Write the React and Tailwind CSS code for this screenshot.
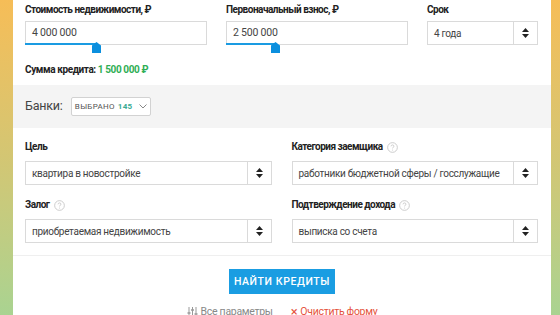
import React from "react";

function SortIcon() {
	return (
		<svg width="7" height="10" viewBox="0 0 7 10">
			<path d="M3.5 0 L7 4 H0 Z" fill="#222" />
			<path d="M3.5 10 L7 6 H0 Z" fill="#222" />
		</svg>
	);
}

function Help() {
	return (
		<svg width="11" height="11" viewBox="0 0 12 12" className="ml-1 inline-block">
			<circle cx="6" cy="6" r="5.3" fill="none" stroke="#c8c8c8" strokeWidth="1" />
			<path d="M4.4 4.7 C4.4 3.7 5.1 3.2 6 3.2 C6.9 3.2 7.6 3.8 7.6 4.6 C7.6 5.6 6.1 5.8 6.1 7" fill="none" stroke="#c8c8c8" strokeWidth="1" />
			<circle cx="6.1" cy="8.7" r="0.6" fill="#c8c8c8" />
		</svg>
	);
}

function Handle() {
	return (
		<svg width="9" height="11" viewBox="0 0 9 11">
			<path d="M4.5 0 L9 3.5 V11 H0 V3.5 Z" fill="#0b8fde" />
		</svg>
	);
}

// track = blue part of the bottom line, knob = handle position
function SliderInput({ value, track, knob }) {
	return (
		<div className="relative h-6 border border-[#dadada] bg-white">
			<div className="flex h-full items-center px-[6px] text-[10.5px] tracking-[-0.2px] text-[#444]">{value}</div>
			<div className={`absolute -bottom-px left-[-1px] h-[2px] bg-[#1a9be2] ${track}`} />
			<div className={`absolute top-[20px] ${knob}`}>
				<Handle />
			</div>
		</div>
	);
}

function Select({ value }) {
	return (
		<div className="flex h-6 border border-[#dadada] bg-white">
			<div className="flex flex-1 items-center overflow-hidden whitespace-nowrap px-[6px] text-[10px] tracking-[-0.3px] text-[#444]">{value}</div>
			<div className="flex w-6 items-center justify-center border-l border-[#dadada]">
				<SortIcon />
			</div>
		</div>
	);
}

function Label({ children, help }) {
	return (
		<div className="flex h-3 items-center text-[10px] font-bold leading-3 tracking-[-0.5px] text-[#222]">
			{children}
			{help && <Help />}
		</div>
	);
}

export default function App() {
	return (
		<div className="h-[315px] w-[560px] overflow-hidden bg-gradient-to-b from-[#f6bd57] via-[#d3c673] to-[#a9d391] pl-[13px] pr-[9px] font-['Roboto',sans-serif]">
			<div className="h-full bg-white">
				<div className="pl-3 pr-[13px] pt-1">
					<div className="grid grid-cols-[182px_182px_1fr] gap-[19px]">
						<div>
							<Label>Стоимость недвижимости, ₽</Label>
							<div className="mt-[5px]">
								<SliderInput value="4 000 000" track="w-[71px]" knob="left-[66px]" />
							</div>
						</div>
						<div>
							<Label>Первоначальный взнос, ₽</Label>
							<div className="mt-[5px]">
								<SliderInput value="2 500 000" track="w-[49px]" knob="left-[44px]" />
							</div>
						</div>
						<div>
							<Label>Срок</Label>
							<div className="mt-[5px]">
								<Select value="4 года" />
							</div>
						</div>
					</div>
					<div className="mt-[19px] h-3 text-[10px] font-bold leading-3 tracking-[-0.4px] text-[#222]">
						Сумма кредита: <span className="text-[#2fae55]">1 500 000 ₽</span>
					</div>
				</div>

				<div className="mt-[9px] flex h-[43px] items-center bg-[#f4f4f4] px-3">
					<span className="text-[12.5px] tracking-[-0.2px] text-[#444]">Банки:</span>
					<div className="ml-[8px] flex h-[19px] w-[80px] items-center justify-center gap-[3px] rounded-[2px] border border-[#d2d2d2] bg-white text-[8px] tracking-[0.3px] text-[#555]">
						ВЫБРАНО <span className="font-bold text-[#3aab93]">145</span>
						<svg width="8" height="5" viewBox="0 0 8 5" className="ml-[3px]">
							<path d="M0.5 0.5 L4 4 L7.5 0.5" fill="none" stroke="#888" strokeWidth="1" />
						</svg>
					</div>
				</div>

				<div className="border-b border-[#efefef] pb-3 pl-3 pr-[13px] pt-[13px]">
					<div className="grid grid-cols-2 gap-x-5">
						<div>
							<Label>Цель</Label>
							<div className="mt-2">
								<Select value="квартира в новостройке" />
							</div>
						</div>
						<div>
							<Label help>Категория заемщика</Label>
							<div className="mt-2">
								<Select value="работники бюджетной сферы / госслужащие" />
							</div>
						</div>
						<div className="mt-[14px]">
							<Label help>Залог</Label>
							<div className="mt-2">
								<Select value="приобретаемая недвижимость" />
							</div>
						</div>
						<div className="mt-[14px]">
							<Label help>Подтверждение дохода</Label>
							<div className="mt-2">
								<Select value="выписка со счета" />
							</div>
						</div>
					</div>
				</div>

				<div className="flex justify-center pt-[13px]">
					<button className="flex h-[25px] w-[106px] items-center justify-center bg-[#1a9de2] text-[10.5px] font-medium tracking-[0.6px] text-white">
						НАЙТИ КРЕДИТЫ
					</button>
				</div>

				<div className="mt-[10px] flex justify-center gap-[18px] text-[10.5px] leading-[15px] tracking-[-0.3px]">
					<span className="flex items-center gap-[3px] text-[#888]">
						<svg width="11" height="10" viewBox="0 0 11 10">
							<path d="M2 0 V10 M5.5 0 V10 M9 0 V10" stroke="#999" strokeWidth="1" />
							<path d="M0.5 6 H3.5 M4 3 H7 M7.5 7 H10.5" stroke="#999" strokeWidth="1.5" />
						</svg>
						Все параметры
					</span>
					<span className="flex items-center gap-[3px] text-[#e5533d]">
						<span className="text-[13px]">×</span>
						Очистить форму
					</span>
				</div>
			</div>
		</div>
	);
}
